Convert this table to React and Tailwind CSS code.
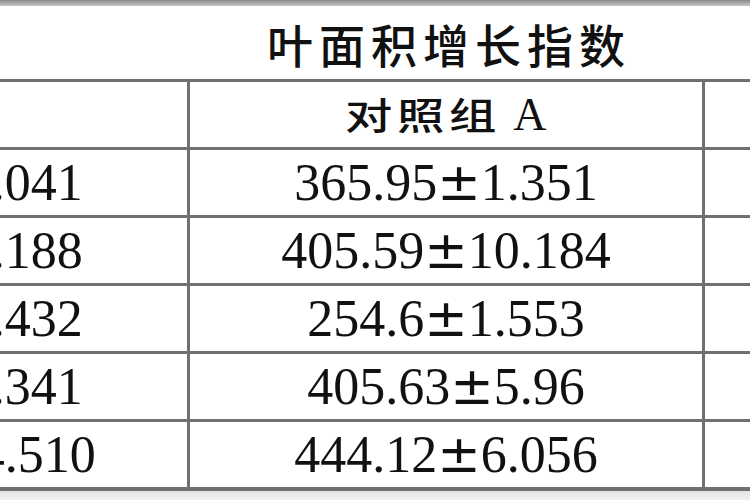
import React from "react";

const serif = "font-['Liberation_Serif','Times_New_Roman',serif]";
const cjk = "font-['Noto_Sans_CJK_SC','Noto_Sans_CJK_JP',sans-serif]";

const rows = [
  ["358.26", "1.041", "365.95", "1.351", "372.18", "2.206"],
  ["397.74", "9.188", "405.59", "10.184", "411.02", "8.317"],
  ["248.39", "2.432", "254.6", "1.553", "260.47", "1.972"],
  ["398.15", "3.341", "405.63", "5.96", "409.88", "4.125"],
  ["437.86", "14.510", "444.12", "6.056", "450.33", "5.748"],
];

function Val({ a, b }) {
  return (
    <span className={`${serif} text-[52px] leading-none text-[#111111] whitespace-nowrap flex items-baseline`}>
      <span>{a}</span>
      <span className="font-['DejaVu_Sans',sans-serif] text-[52px] leading-none">±</span>
      <span>{b}</span>
    </span>
  );
}

function Header({ label, letter }) {
  return (
    <div className="flex items-center justify-center whitespace-nowrap text-[#111111]">
      <span
        className={`${cjk} font-medium inline-block origin-left scale-x-[1.28] text-[37px] leading-none tracking-[3.6px] mr-[46px]`}
      >
        {label}
      </span>
      <span className={`${serif} text-[46px] leading-none`}>{letter}</span>
    </div>
  );
}

export default function App() {
  return (
    <div className="w-[750px] h-[500px] overflow-hidden bg-white">
      <div className="-ml-[325px] w-[1542px] flex flex-col">
        <div className="h-[6px] bg-linear-to-b from-[#8a8a8a] to-[#c8c8c8]" />
        <div className="h-[76px] border-b-[3px] border-[#707070] flex items-center justify-center">
          <span className={`${cjk} font-medium text-[46px] leading-none tracking-[6px] pl-[6px] text-[#111111]`}>
            叶面积增长指数
          </span>
        </div>
        <div className="h-[68px] border-b-[3px] border-[#707070] grid grid-cols-[515px_515px_512px]">
          <div className="border-r-[3px] border-[#707070]" />
          <div className="border-r-[3px] border-[#707070] flex items-center justify-center">
            <Header label="对照组" letter="A" />
          </div>
          <div />
        </div>
        {rows.map((r, i) => (
          <div
            key={i}
            className={`grid grid-cols-[515px_515px_512px] border-[#707070] ${
              i === rows.length - 1 ? "h-[69px] border-b-[4px]" : "h-[68px] border-b-[3px]"
            }`}
          >
            <div className="border-r-[3px] border-[#707070] flex items-center justify-center">
              <Val a={r[0]} b={r[1]} />
            </div>
            <div className="border-r-[3px] border-[#707070] flex items-center justify-center">
              <Val a={r[2]} b={r[3]} />
            </div>
            <div />
          </div>
        ))}
        <div className="h-[10px] bg-linear-to-b from-[#e2e2e2] to-[#f4f4f4]" />
      </div>
    </div>
  );
}
